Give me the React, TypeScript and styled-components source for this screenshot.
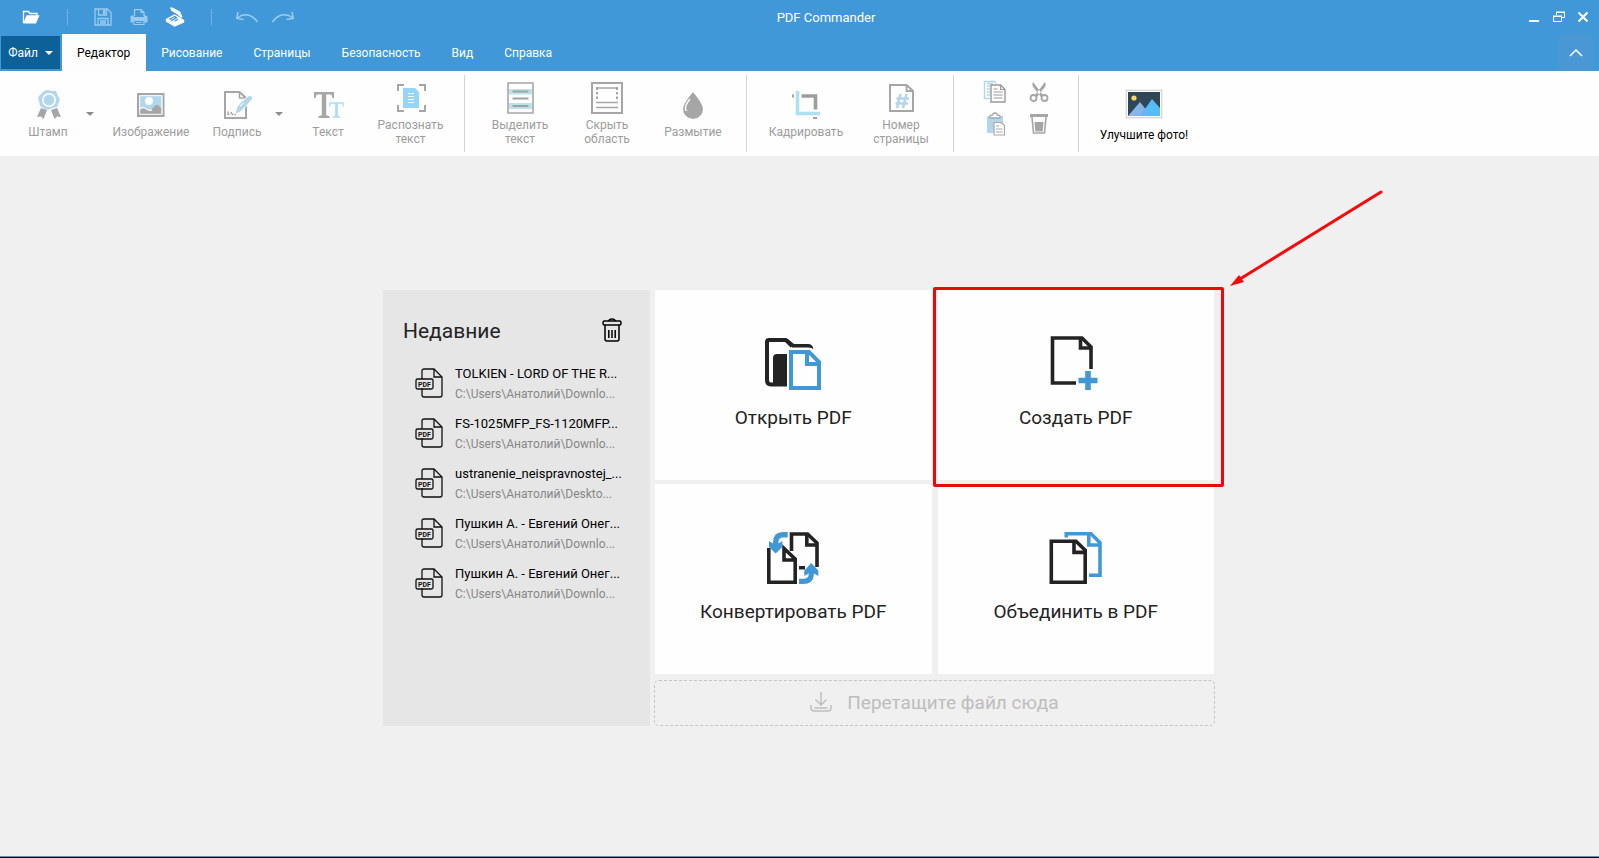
import React from "react";
import styled, { createGlobalStyle } from "styled-components";

const GREY = "#a6a6a6";
const SKY = "#b2d6ec";
const INK = "#232323";
const BLUE = "#4198d5";
const FADED = "#9ccbee";

const GlobalStyle = createGlobalStyle`
  *, *::before, *::after { box-sizing: border-box; }
  body { margin: 0; background: #f0f0f0; font-family: Roboto, "Liberation Sans", sans-serif; }
  button { font: inherit; color: inherit; border: 0; margin: 0; padding: 0; background: none; cursor: pointer; }
  svg { display: block; flex: none; }
`;

const Page = styled.div`
  min-height: 100vh;
  display: flex;
  flex-direction: column;
  border-bottom: 1px solid #020a20;
`;

const Header = styled.header`
  background: #4198d9;
  color: #fff;
`;

const TitleBar = styled.div`
  display: grid;
  grid-template-columns: 1fr auto 1fr;
  align-items: center;
  height: 34px;
`;

const QuickAccess = styled.div`
  display: flex;
  align-items: center;
  padding-left: 13px;
`;

const QuickButton = styled.button`
  width: 36px;
  height: 34px;
  display: flex;
  align-items: center;
  justify-content: center;
`;

const QuickDivider = styled.span`
  width: 1px;
  height: 16px;
  margin: 0 17px 0 18px;
  background: #6fb1e2;
`;

const Title = styled.h1`
  margin: 0;
  padding: 2px 0 0 53px;
  font-size: 13px;
  line-height: 20px;
  font-weight: 400;
`;

const WindowControls = styled.div`
  display: flex;
  justify-content: flex-end;
  padding-right: 4px;
`;

const WindowButton = styled.button`
  width: 24px;
  height: 34px;
  display: flex;
  align-items: center;
  justify-content: center;
`;

const TabRow = styled.nav`
  display: flex;
  align-items: stretch;
  height: 37px;
  padding: 0 6px 0 1px;
`;

const FileButton = styled.button`
  width: 59px;
  margin: 2px 2px 2px 0;
  display: flex;
  align-items: center;
  justify-content: center;
  gap: 7px;
  background: #0d6098;
  font-size: 12px;
  line-height: 16px;
`;

const Tab = styled.button<{ $active?: boolean }>`
  padding: 0 16px 0 15px;
  font-size: 12px;
  line-height: 16px;
  background: ${(p) => (p.$active ? "#fdfdfd" : "transparent")};
  color: ${(p) => (p.$active ? "#000" : "#fff")};
`;

const CollapseButton = styled.button`
  width: 34px;
  margin-left: auto;
  display: flex;
  align-items: center;
  justify-content: center;
  background: #4a97d5;
`;

const Ribbon = styled.div`
  display: flex;
  height: 85px;
  padding: 4px 0;
  background: #fefefe;
`;

const Group = styled.div<{ $start?: number; $end?: number; $last?: boolean }>`
  display: flex;
  padding: 0 ${(p) => p.$end ?? 6}px 0 ${(p) => p.$start ?? 10}px;
  border-right: ${(p) => (p.$last ? "0" : "1px solid #d4d4d4")};
`;

const Split = styled.div`
  display: flex;
  padding-left: 11px;
`;

const ToolButton = styled.button<{ $width: number; $accent?: boolean }>`
  width: ${(p) => p.$width}px;
  padding-top: ${(p) => (p.$accent ? 2 : 0)}px;
  display: flex;
  flex-direction: column;
  align-items: center;
  justify-content: center;
  gap: ${(p) => (p.$accent ? 8 : 4)}px;
  font-size: 12px;
  line-height: 14px;
  white-space: pre-line;
  color: ${(p) => (p.$accent ? "#000" : "#9c9c9c")};
`;

const ArrowButton = styled.button`
  width: 28px;
  display: flex;
  align-items: center;
  justify-content: center;
`;

const ClipGrid = styled.div`
  display: grid;
  grid-template-columns: 44px 44px;
  grid-template-rows: 32px 32px;
  padding: 1px 11px 0 9px;
`;

const ClipButton = styled.button`
  display: flex;
  align-items: center;
  justify-content: center;
`;

const Workspace = styled.main`
  flex: 1;
  display: flex;
  align-items: center;
  justify-content: center;
  padding: 4px 1px 0 0;
  border-bottom: 1px solid #6d8ca8;
`;

const Start = styled.div`
  display: flex;
  gap: 4px;
  width: 832px;
  max-width: 100%;
`;

const Recent = styled.section`
  flex: 0 0 267px;
  padding: 24px 28px 24px 20px;
  background: #e6e6e6;
`;

const RecentHead = styled.div`
  display: flex;
  align-items: center;
  justify-content: space-between;
  height: 32px;
  margin-bottom: 18px;
`;

const RecentTitle = styled.h2`
  margin: 0;
  padding-top: 2px;
  font-size: 21px;
  line-height: 32px;
  font-weight: 400;
  color: #232323;
`;

const RecentList = styled.ul`
  list-style: none;
  margin: 0;
  padding: 0 0 0 12px;
  display: flex;
  flex-direction: column;
  gap: 10px;
`;

const RecentItem = styled.button`
  display: flex;
  align-items: center;
  gap: 12px;
  text-align: left;
  white-space: nowrap;
`;

const FileName = styled.span`
  display: block;
  font-size: 13px;
  line-height: 20px;
  color: #000;
`;

const FilePath = styled.span`
  display: block;
  font-size: 12px;
  line-height: 20px;
  color: #868686;
`;

const Actions = styled.div`
  flex: 1;
  display: flex;
  flex-direction: column;
  gap: 6px;
`;

const TileGrid = styled.div`
  display: grid;
  grid-template-columns: 1fr 1fr;
  gap: 4px 6px;
  padding: 0 1px;
`;

const TileCell = styled.div`
  position: relative;
  display: flex;
`;

const Tile = styled.button`
  flex: 1;
  height: 190px;
  padding-bottom: 5px;
  display: flex;
  flex-direction: column;
  align-items: center;
  justify-content: center;
  gap: 14px;
  background: #fefefe;
  color: #232323;
  font-size: 19px;
  line-height: 24px;
`;

const Highlight = styled.span`
  position: absolute;
  inset: -3px -10px -7px -5px;
  z-index: 1;
  border: 3px solid #ea0a0a;
  border-radius: 2px;
  pointer-events: none;
`;

const Pointer = styled.svg`
  position: absolute;
  left: calc(100% + 14px);
  bottom: 100%;
  pointer-events: none;
`;

const DropZone = styled.div`
  height: 46px;
  display: flex;
  align-items: center;
  justify-content: center;
  gap: 15px;
  border: 1px dashed #c4c4c4;
  border-radius: 5px;
  color: #bdbdbd;
  font-size: 19px;
  line-height: 24px;
`;

/* ---------- title bar icons ---------- */

const FolderIcon = () => (
  <svg width="18" height="16" viewBox="0 0 18 16">
    <path d="M1.500 14V2.500h5l1.500 2h7V7" fill="none" stroke="#fff" strokeWidth="1.300" />
    <path d="M4.500 6.200h13L14 14.600H1.200z" fill="#fff" />
  </svg>
);

const SaveIcon = () => (
  <svg width="18" height="18" viewBox="0 0 18 18" fill="none" stroke={FADED} strokeWidth="1.300">
    <path d="M1 1h12.500L17 4.500V17H1z" />
    <path d="M4.500 1v6h8V1M4 17v-6.500h10V17M6 13h6M6 15h6" />
    <path d="M9 2h2.500v4H9z" fill={FADED} stroke="none" />
  </svg>
);

const PrintIcon = () => (
  <svg width="18" height="18" viewBox="0 0 18 18">
    <path d="M4.500 8V1.600h6.500l3 3V8" fill="none" stroke={FADED} strokeWidth="1.300" />
    <path d="M10.500 1v4H14z" fill={FADED} />
    <path d="M2 7.500h2v1.500h10V7.500h2q1.500 0 1.500 1.500v5.500H14.500V12h-11v2.500H.5V9Q.5 7.500 2 7.500z" fill={FADED} />
    <path d="M4 12.500h10v4H4zM6 14.500h6" fill="none" stroke={FADED} strokeWidth="1.200" />
  </svg>
);

const ScanIcon = () => (
  <svg width="20" height="20" viewBox="0 0 20 20">
    <path d="M5 .5h2.500l7.500 4 2.500 5.500-1.500 1L12 7 6.500 4z" fill="#fff" />
    <path d="M.8 12 9.500 7.200 19.200 13v2.500L9.500 19.700.8 14.500z" fill="#fff" />
    <path d="m5 12 4.800-2.600 1.800 1.200L7 13.200zM9.500 14.200l3.500-2" fill="none" stroke="#4198d9" strokeWidth="1.300" />
  </svg>
);

const UndoIcon = ({ flip }: { flip?: boolean }) => (
  <svg width="24" height="14" viewBox="0 0 24 14">
    <g transform={flip ? "matrix(-1 0 0 1 24 0)" : undefined} fill="none" stroke={FADED} strokeWidth="1.500">
      <path d="M2 8Q8 3.500 14 5.300Q19 6.800 22.500 12" />
      <path d="M3 2 1.700 8.500 8.500 9.600" />
    </g>
  </svg>
);

/* ---------- ribbon icons, drawn on a 32px field ---------- */

const Caret = ({ color }: { color: string }) => (
  <svg width="8" height="4" viewBox="0 0 8 4">
    <path d="M0 0h8L4 4z" fill={color} />
  </svg>
);

const Icon32 = ({ children }: { children: React.ReactNode }) => (
  <svg width="32" height="32" viewBox="0 0 32 32" fill="none">{children}</svg>
);

const StampIcon = () => (
  <Icon32>
    <path d="M9 19 5 28l4-.5 2.500 2.500 3.500-9zM25 19l4 9-4-.5-2.500 2.500-3.500-9z" fill={GREY} />
    <path d="M12 2q4-2 7 0h5l2 5q3 3 1 6l-2 5-5 1q-4 3-7 1l-5-3-1-5q-2-4 1-6z" fill={SKY} />
    <circle cx="17" cy="11" r="6.200" stroke="#fff" strokeWidth="1.600" />
  </Icon32>
);

const ImageIcon = () => (
  <Icon32>
    <path d="M4 6h23v20H4z" fill={SKY} />
    <circle cx="14" cy="12" r="4" fill="#fefefe" />
    <path d="M4 22q4-5 8-3l4 2q5-6 7-5l4 4v7H4z" fill={GREY} />
    <path d="M4 20q3-2 6-1 4 3 7 2" stroke="#fefefe" strokeWidth="1.300" />
    <path d="M3 5h25.500v22H3z" stroke={GREY} strokeWidth="2" />
    <path d="M4.700 6.700h22.100v18.600H4.700z" stroke="#fefefe" strokeWidth="1" />
  </Icon32>
);

const SignIcon = () => (
  <Icon32>
    <path d="M4 3h14.500l6.500 6v20H4z" stroke={GREY} strokeWidth="2" />
    <path d="M18.500 3v6H25" stroke={GREY} strokeWidth="1.500" />
    <path d="M14 25q1-8 6-12l8-6.500q4.500 0 3.500 3.500l-9 10q-3 4-8.500 5z" fill={SKY} stroke="#fefefe" strokeWidth="1" />
    <path d="m19 17 4-3" stroke="#fefefe" strokeWidth="1" />
    <path d="M7 22.500v3h1.500m1-2.500 2 2.500h1m1 0h1.500" stroke={GREY} strokeWidth="1.400" />
  </Icon32>
);

const TextIcon = () => (
  <Icon32>
    <path d="M2 3h20v6h-1.600l-1-3.600h-5.200v20.800l3.300 1V29H6.500v-1.800l3.300-1V5.400H4.600L3.600 9H2z" fill={GREY} />
    <path d="M17 13h15v5h-1.300l-.9-3h-3.600v11.600l2.400.9V29h-8.200v-1.500l2.400-.9V15h-3.600l-.9 3H17z" fill="#a9dcf5" stroke="#fefefe" strokeWidth=".6" />
  </Icon32>
);

const RecognizeIcon = () => (
  <Icon32>
    <path d="M3 9V3h6M24 3h6v6M3 23v6h6M24 29h6v-6" stroke={GREY} strokeWidth="2" />
    <path d="M8 6h12l4 4v16H8z" fill="#93d5fb" />
    <path d="M13 11.500h6M13 14.500h6M13 17.500h6M13 20.500h6" stroke="#fefefe" strokeWidth="1.100" />
  </Icon32>
);

const MarkTextIcon = () => (
  <Icon32>
    <path d="M4 1h25v30H4z" stroke={GREY} strokeWidth="1.600" />
    <path d="M5 7h23v5.500H5zM5 21h23v6H5z" fill="#bfe2ea" />
    <path d="M8.500 9.500h16M8.500 16.500h16M8.500 24h16" stroke="#9aa3a6" strokeWidth="2" />
  </Icon32>
);

const HideIcon = () => (
  <Icon32>
    <path d="M1 1h30v30H1z" stroke={GREY} strokeWidth="2" />
    <path d="M5 6h22M5 20.500h22M5 25.500h22" stroke={GREY} strokeWidth="1.700" />
    <path d="M6 5v3M6 10v2.500M6 14.500v2.500M26 5v3M26 10v2.500M26 14.500v2.500" stroke={GREY} strokeWidth="2" />
  </Icon32>
);

const DropIcon = () => (
  <Icon32>
    <path d="M16 3q10 12 10 17a10 10 0 0 1-20 0Q6 15 16 3z" fill={GREY} />
    <path d="M13 10q-5 6-4.500 10 0 2 1.500 1" stroke="#fefefe" strokeWidth="1.400" />
  </Icon32>
);

const CropIcon = () => (
  <Icon32>
    <path d="M11.500 7H25.500v13.500" stroke="#9d9d9d" strokeWidth="3.600" />
    <path d="M2 5.500h2v3H2zM23 28h4v2h-4z" fill="#9d9d9d" />
    <path d="M7.500 2v22.500H30" stroke="#aee0f4" strokeWidth="3.600" />
  </Icon32>
);

const PageNumberIcon = () => (
  <Icon32>
    <path d="M5 3h16.500L28 9v20H5z" stroke={GREY} strokeWidth="2" />
    <path d="M21.500 3v6H28" stroke={GREY} strokeWidth="1.800" />
    <path d="m15.500 12-3.500 14M21.500 12l-3.500 14M11.500 16.500h12.500M10.500 21.500h12.500" stroke={SKY} strokeWidth="2.600" />
  </Icon32>
);

const CopyIcon = () => (
  <svg width="24" height="24" viewBox="0 0 24 24" fill="none">
    <path d="M7 18.500H1.500v-17h10l1.500 2M4 6h3M4 9h3M4 12h3M4 15h3M4 3.500h6" stroke={SKY} strokeWidth="1.400" />
    <path d="M8 5h9.500L22 9.500V22H8z" stroke="#999" strokeWidth="1.400" />
    <path d="M17.500 5v4.500H22M10.500 9h4M10.500 12h9M10.500 15h9M10.500 18h9" stroke="#999" strokeWidth="1.200" />
  </svg>
);

const CutIcon = () => (
  <svg width="20" height="22" viewBox="0 0 20 22" fill="none">
    <path d="M4 1q-1.500 3 .5 5.500L12 16l2-2zM16 1q1.500 3-.5 5.500L8 16l-2-2z" fill={GREY} />
    <circle cx="4.500" cy="17" r="3" stroke={GREY} strokeWidth="1.800" />
    <circle cx="15.500" cy="17" r="3" stroke={GREY} strokeWidth="1.800" />
  </svg>
);

const PasteIcon = () => (
  <svg width="20" height="24" viewBox="0 0 20 24" fill="none">
    <path d="M2 4h16v17H2z" fill={SKY} />
    <path d="M5 6V4q0-1 2.500-1Q8 1 10 1t2.500 2Q15 3 15 4v2z" fill="#fefefe" stroke={GREY} strokeWidth="1.300" />
    <path d="M9 10.500h7l3.500 3V23H9z" fill="#fefefe" stroke={GREY} strokeWidth="1.200" />
    <path d="M11 14h3M11 17h6.500M11 20h6.500" stroke={GREY} strokeWidth="1.200" />
  </svg>
);

const BinIcon = () => (
  <svg width="20" height="22" viewBox="0 0 20 22" fill="none">
    <path d="M1 1h18v3H1z" fill={GREY} />
    <path d="m3 4 1.500 16h11L17 4" stroke={GREY} strokeWidth="1.600" />
    <path d="M5.500 9h9l-.8 9.500H6.300z" fill={GREY} />
  </svg>
);

const EnhanceIcon = () => (
  <svg width="38" height="32" viewBox="0 0 38 32">
    <path d="M0 1h38v30H0z" fill="#f0f0f0" />
    <path d="M1 2h36v28H1z" fill="#d8d8d8" />
    <path d="M2 3h34v26H2z" fill="#fff" />
    <path d="M3 4h32v24H3z" fill="#2f4558" />
    <circle cx="9" cy="10" r="2.600" fill="#fbd568" />
    <path d="m3 28 12-14 11 14z" fill="#86b6e8" />
    <path d="m15 28 12-17 8 9v8z" fill="#53bdf5" />
    <path d="m15 28 6-8 4 8z" fill="#69b5ee" />
  </svg>
);

/* ---------- start screen icons ---------- */

const TrashIcon = () => (
  <svg width="20" height="24" viewBox="0 0 20 24" fill="none" stroke="#000" strokeWidth="1.500">
    <path d="M7 3q0-2 3-2t3 2" />
    <rect x="1" y="3" width="18" height="4" rx="1.500" />
    <path d="M3 7v14q0 2 2 2h10q2 0 2-2V7M6.800 12v8M10 12v8M13.200 12v8" />
  </svg>
);

const PdfFileIcon = () => (
  <svg width="28" height="32" viewBox="0 0 28 32" fill="none" stroke="#111" strokeWidth="1.300">
    <path d="M7 11V3q0-2 2-2h10l8 8v18q0 2-2 2H9q-2 0-2-2v-7" />
    <path d="M19 1v8h8" />
    <rect x="1" y="11" width="17" height="10" rx="1.500" />
    <text x="9.500" y="18.500" textAnchor="middle" fontSize="7" fontWeight="700" fill="#111" stroke="none" fontFamily="Roboto, sans-serif">PDF</text>
  </svg>
);

const OpenPdfIcon = () => (
  <svg width="56" height="56" viewBox="0 0 56 56" fill="none">
    <path d="M22 48.500H6Q2 48.500 2 44V6q0-2 2-2h16l2 1 5 5" stroke={INK} strokeWidth="4" />
    <path d="M19 2h1q2 0 4 2l5 4h14q4.500 0 5.500 5-2-1.500-5-1.500H27z" fill={INK} />
    <path d="M8 46V22q0-4 4-4h10v32H6q2-1 2-4z" fill={INK} />
    <path d="M26 16h18l10 10v26H26z" fill="#fefefe" stroke={BLUE} strokeWidth="4" />
    <path d="M42 16v12h12" stroke={BLUE} strokeWidth="4" />
  </svg>
);

const CreatePdfIcon = () => (
  <svg width="56" height="56" viewBox="0 0 56 56" fill="none">
    <path d="M28 47H4.500V2H34l9 9v22" stroke={INK} strokeWidth="3.600" />
    <path d="M32.500 2v10H43" stroke={INK} strokeWidth="3.600" />
    <path d="M40 35v19M30.500 44.500h19" stroke={BLUE} strokeWidth="5.600" />
  </svg>
);

const ConvertPdfIcon = () => (
  <svg width="56" height="56" viewBox="0 0 56 56" fill="none">
    <path d="M26.500 21V4h16L52 13v24M34 37.700h6" stroke={INK} strokeWidth="3.600" />
    <path d="M41.800 4v11H52" stroke={INK} strokeWidth="3.600" />
    <path d="M3.800 18v34.200h26.400V29L19 18.500V30h11" stroke={INK} strokeWidth="3.600" />
    <path d="M22.700 4.700H18Q10.800 4.700 10.800 12v3" stroke={BLUE} strokeWidth="5.400" />
    <path d="M10.700 23.500 4 17v-6l6.700 4 6.700-4v6z" fill={BLUE} />
    <path d="M34 51.300h4q8 0 8.300-7v-4" stroke={BLUE} strokeWidth="5.200" />
    <path d="m46.300 33 7 7.500V46l-7-4-7 4v-5.500z" fill={BLUE} />
  </svg>
);

const MergePdfIcon = () => (
  <svg width="56" height="56" viewBox="0 0 56 56" fill="none">
    <path d="M18.300 7.500V3.800H43l9 9v32.400H41" stroke={BLUE} strokeWidth="3.600" />
    <path d="M40.800 3.800V15H52" stroke={BLUE} strokeWidth="3.600" />
    <path d="M3.300 11.200H28l9.200 9v32H3.300z" stroke={INK} strokeWidth="3.600" />
    <path d="M26 11.200v11.200h11.200" stroke={INK} strokeWidth="3.600" />
  </svg>
);

const DownloadIcon = () => (
  <svg width="22" height="22" viewBox="0 0 22 22" fill="none" stroke="#bdbdbd" strokeWidth="1.400">
    <path d="M11 0v13M5.500 7.500 11 13l5.500-5.500M1 13v3q0 3 3 3h14q3 0 3-3v-3M4.500 16h13" />
  </svg>
);

/* ---------- data ---------- */

const tabs = ["Редактор", "Рисование", "Страницы", "Безопасность", "Вид", "Справка"];

const recentFiles = [
  { name: "TOLKIEN - LORD OF THE R...", path: "C:\\Users\\Анатолий\\Downlo..." },
  { name: "FS-1025MFP_FS-1120MFP...", path: "C:\\Users\\Анатолий\\Downlo..." },
  { name: "ustranenie_neispravnostej_...", path: "C:\\Users\\Анатолий\\Deskto..." },
  { name: "Пушкин А. - Евгений Онег...", path: "C:\\Users\\Анатолий\\Downlo..." },
  { name: "Пушкин А. - Евгений Онег...", path: "C:\\Users\\Анатолий\\Downlo..." },
];

const tiles = [
  { label: "Открыть PDF", icon: <OpenPdfIcon /> },
  { label: "Создать PDF", icon: <CreatePdfIcon />, highlighted: true },
  { label: "Конвертировать PDF", icon: <ConvertPdfIcon /> },
  { label: "Объединить в PDF", icon: <MergePdfIcon /> },
];

type ToolProps = { label: string; width: number; accent?: boolean; children: React.ReactNode };

const Tool = ({ label, width, accent, children }: ToolProps) => (
  <ToolButton $width={width} $accent={accent}>
    {children}
    <span>{label}</span>
  </ToolButton>
);

export default function App() {
  return (
    <Page>
      <GlobalStyle />
      <Header>
        <TitleBar>
          <QuickAccess>
            <QuickButton aria-label="Открыть"><FolderIcon /></QuickButton>
            <QuickDivider />
            <QuickButton aria-label="Сохранить"><SaveIcon /></QuickButton>
            <QuickButton aria-label="Печать"><PrintIcon /></QuickButton>
            <QuickButton aria-label="Сканировать"><ScanIcon /></QuickButton>
            <QuickDivider />
            <QuickButton aria-label="Отменить"><UndoIcon /></QuickButton>
            <QuickButton aria-label="Повторить"><UndoIcon flip /></QuickButton>
          </QuickAccess>
          <Title>PDF Commander</Title>
          <WindowControls>
            <WindowButton aria-label="Свернуть">
              <svg width="12" height="12" viewBox="0 0 12 12"><path d="M0 9h10v2H0z" fill="#fff" /></svg>
            </WindowButton>
            <WindowButton aria-label="Восстановить">
              <svg width="12" height="12" viewBox="0 0 12 12" fill="none" stroke="#fff">
                <path d="M3.500 4V1.500h8v5H9M.5 5.500h8v5h-8zM3 1h9M0 5h9" />
              </svg>
            </WindowButton>
            <WindowButton aria-label="Закрыть">
              <svg width="12" height="12" viewBox="0 0 12 12" stroke="#fff" strokeWidth="2"><path d="m1.500 1.500 9 9m0-9-9 9" /></svg>
            </WindowButton>
          </WindowControls>
        </TitleBar>
        <TabRow>
          <FileButton>Файл<Caret color="#fff" /></FileButton>
          {tabs.map((tab, i) => (
            <Tab key={tab} $active={i === 0}>{tab}</Tab>
          ))}
          <CollapseButton aria-label="Свернуть ленту">
            <svg width="14" height="8" viewBox="0 0 14 8" fill="none" stroke="#fff" strokeWidth="1.500"><path d="m1 7 6-6 6 6" /></svg>
          </CollapseButton>
        </TabRow>
      </Header>

      <Ribbon>
        <Group $start={9}>
          <Split>
            <Tool label="Штамп" width={56}><StampIcon /></Tool>
            <ArrowButton aria-label="Варианты штампа"><Caret color="#8c8c8c" /></ArrowButton>
          </Split>
          <Tool label="Изображение" width={94}><ImageIcon /></Tool>
          <Split>
            <Tool label="Подпись" width={56}><SignIcon /></Tool>
            <ArrowButton aria-label="Варианты подписи"><Caret color="#8c8c8c" /></ArrowButton>
          </Split>
          <Tool label="Текст" width={70}><TextIcon /></Tool>
          <Tool label={"Распознать\nтекст"} width={95}><RecognizeIcon /></Tool>
        </Group>
        <Group $end={9}>
          <Tool label={"Выделить\nтекст"} width={90}><MarkTextIcon /></Tool>
          <Tool label={"Скрыть\nобласть"} width={84}><HideIcon /></Tool>
          <Tool label="Размытие" width={88}><DropIcon /></Tool>
        </Group>
        <Group>
          <Tool label="Кадрировать" width={98}><CropIcon /></Tool>
          <Tool label={"Номер\nстраницы"} width={92}><PageNumberIcon /></Tool>
        </Group>
        <Group>
          <ClipGrid>
            <ClipButton aria-label="Копировать"><CopyIcon /></ClipButton>
            <ClipButton aria-label="Вырезать"><CutIcon /></ClipButton>
            <ClipButton aria-label="Вставить"><PasteIcon /></ClipButton>
            <ClipButton aria-label="Удалить"><BinIcon /></ClipButton>
          </ClipGrid>
        </Group>
        <Group $last>
          <Tool label="Улучшите фото!" width={110} accent><EnhanceIcon /></Tool>
        </Group>
      </Ribbon>

      <Workspace>
        <Start>
          <Recent>
            <RecentHead>
              <RecentTitle>Недавние</RecentTitle>
              <button aria-label="Очистить список"><TrashIcon /></button>
            </RecentHead>
            <RecentList>
              {recentFiles.map((file, i) => (
                <li key={i}>
                  <RecentItem>
                    <PdfFileIcon />
                    <span>
                      <FileName>{file.name}</FileName>
                      <FilePath>{file.path}</FilePath>
                    </span>
                  </RecentItem>
                </li>
              ))}
            </RecentList>
          </Recent>
          <Actions>
            <TileGrid>
              {tiles.map((tile) => (
                <TileCell key={tile.label}>
                  <Tile>
                    {tile.icon}
                    {tile.label}
                  </Tile>
                  {tile.highlighted && (
                    <>
                      <Highlight />
                      <Pointer width="158" height="102" viewBox="0 0 158 102">
                        <path d="M153 4 12 91" stroke="#f50a0a" strokeWidth="3" strokeLinecap="round" />
                        <path d="M2 98 11 87l5 7z" fill="#f50a0a" />
                      </Pointer>
                    </>
                  )}
                </TileCell>
              ))}
            </TileGrid>
            <DropZone>
              <DownloadIcon />
              Перетащите файл сюда
            </DropZone>
          </Actions>
        </Start>
      </Workspace>
    </Page>
  );
}
